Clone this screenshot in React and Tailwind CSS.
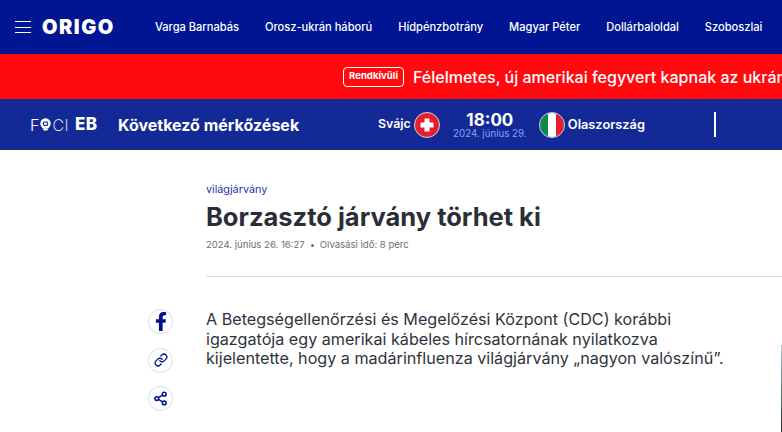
import React from "react";

const nav = ["Varga Barnabás", "Orosz-ukrán háború", "Hídpénzbotrány", "Magyar Péter", "Dollárbaloldal", "Szoboszlai"];

function Share({ children }) {
  return (
    <div className="w-[25px] h-[25px] rounded-full border border-[#d5dcf5] bg-white flex items-center justify-center">
      {children}
    </div>
  );
}

export default function App() {
  return (
    <div className="w-[782px] h-[432px] overflow-hidden bg-white relative" style={{ fontFamily: "Inter, 'Noto Sans', sans-serif" }}>
      <header className="h-[54px] bg-[#001591] flex items-center pl-[15px] text-white whitespace-nowrap overflow-hidden">
        <div className="w-[16px] flex flex-col gap-[4.5px] mr-[11px]">
          <div className="h-px bg-white" />
          <div className="h-px bg-white" />
          <div className="h-px bg-white" />
        </div>
        <div className="text-[20px] font-black tracking-[1.5px] leading-none w-[113px]">ORIGO</div>
        <nav className="flex gap-[26px] text-[11.1px] font-medium">
          {nav.map((n) => <span key={n}>{n}</span>)}
        </nav>
      </header>

      <div className="h-[45px] bg-[#ff0a0e] flex items-center pl-[343px] text-white whitespace-nowrap overflow-hidden">
        <span className="h-[20px] px-[5px] border border-white rounded-[4px] text-[9.6px] font-bold flex items-center mr-[9px]">Rendkívüli</span>
        <span className="text-[16px] font-medium">Félelmetes, új amerikai fegyvert kapnak az ukránok</span>
      </div>

      <div className="h-[51px] bg-[#132a96] flex items-center text-white whitespace-nowrap">
        <div className="w-[118px] pl-[30px] flex items-center text-[16px] leading-none">
          <span className="font-light">F</span>
          <svg width="13" height="13" viewBox="0 0 13 13">
            <circle cx="6.500" cy="5.500" r="5.200" fill="#fff" />
            <path d="M4.500 3.500h4l.8 2.500-1 2H4.700l-1-2Z" fill="#132a96" />
            <path d="M5.500 4.500h2l.5 1.500-.6 1H5.600L5 6Z" fill="#fff" />
            <path d="M3.500 10.500h6l-1.300 2h-3.400Z" fill="#fff" />
          </svg>
          <span className="font-extralight tracking-[0.4px]">CI</span>
          <span className="font-extrabold text-[17px] ml-[6px] tracking-[0.4px]">EB</span>
        </div>
        <div className="w-[260px] text-[16px] font-bold">Következő mérkőzések</div>
        <div className="text-[12.4px] font-semibold mr-[3px]">Svájc</div>
        <svg width="26" height="26" viewBox="0 0 26 26" className="mr-[12px]">
          <circle cx="13" cy="13" r="12.500" fill="#e3202c" stroke="#d7d3ea" />
          <path d="M10.500 6.500h5v4h4v5h-4v4h-5v-4h-4v-5h4Z" fill="#fff" />
        </svg>
        <div className="w-[76px] flex flex-col items-center pt-[1px]">
          <div className="text-[17px] font-bold leading-[16px]">18:00</div>
          <div className="text-[9.7px] leading-[11px] text-[#7ea6f5]">2024. június 29.</div>
        </div>
        <svg width="26" height="26" viewBox="0 0 26 26" className="ml-[11px] mr-[3px]">
          <defs><clipPath id="flagIt"><circle cx="13" cy="13" r="12" /></clipPath></defs>
          <g clipPath="url(#flagIt)">
            <rect width="9" height="26" fill="#0f8a46" />
            <rect x="9" width="8" height="26" fill="#fff" />
            <rect x="17" width="9" height="26" fill="#e3202c" />
          </g>
          <circle cx="13" cy="13" r="12.500" fill="none" stroke="#d7d3ea" />
        </svg>
        <div className="text-[12.8px] font-semibold w-[146px]">Olaszország</div>
        <div className="w-[2px] h-[25px] bg-white" />
      </div>

      <main className="flex pl-[148px] pt-[33px]">
        <aside className="w-[58px] shrink-0 pt-[126px] flex flex-col gap-[13.5px]">
          <Share>
            <svg width="14" height="19" viewBox="0 0 320 512" fill="#00128c"><path d="M279.140 288l14.220-92.660h-88.910v-60.130c0-25.350 12.420-50.060 52.240-50.060h40.420V6.260S260.430 0 225.360 0c-73.220 0-121.080 44.380-121.080 124.720v70.620H22.890V288h81.390v224h100.170V288z" /></svg>
          </Share>
          <Share>
            <svg width="14" height="14" viewBox="0 0 24 24" fill="none" stroke="#00128c" strokeWidth="2.200" strokeLinecap="round" strokeLinejoin="round"><path d="M10 13a5 5 0 0 0 7.540.54l3-3a5 5 0 0 0-7.070-7.070l-1.720 1.710" /><path d="M14 11a5 5 0 0 0-7.540-.54l-3 3a5 5 0 0 0 7.070 7.070l1.710-1.710" /></svg>
          </Share>
          <Share>
            <svg width="15" height="15" viewBox="0 0 24 24" fill="none" stroke="#00128c" strokeWidth="2.400"><circle cx="18" cy="5" r="3" /><circle cx="6" cy="12" r="3" /><circle cx="18" cy="19" r="3" /><path d="m8.600 13.500 6.800 4" /><path d="m15.400 6.500-6.800 4" /></svg>
          </Share>
        </aside>
        <article className="flex-1 min-w-0">
          <div className="text-[10.8px] leading-[13px] text-[#2a2fb0]">világjárvány</div>
          <h1 className="text-[25.5px] leading-[30px] font-bold text-[#2b2e37] mt-[6px]">Borzasztó járvány törhet ki</h1>
          <div className="flex items-center text-[9.55px] leading-[12px] text-[#6b6e78] mt-[7px]">
            <span>2024. június 26. 16:27</span>
            <span className="w-[3px] h-[3px] rounded-full bg-[#6b6e78] mx-[6px]" />
            <span>Olvasási idő: 8 perc</span>
          </div>
          <div className="h-px bg-[#d5dcf5] mt-[25px]" />
          <p className="w-[530px] text-[16.15px] leading-[19.5px] text-[#30333c] mt-[33px]">
            A Betegségellenőrzési és Megelőzési Központ (CDC) korábbi igazgatója egy amerikai kábeles hírcsatornának nyilatkozva kijelentette, hogy a madárinfluenza világjárvány „nagyon valószínű”.
          </p>
        </article>
      </main>
      <div className="absolute right-0 top-[345px] w-px h-[87px] bg-gradient-to-b from-[#a9cfe0] via-[#5a7a80] to-[#2c3a28]" />
    </div>
  );
}
